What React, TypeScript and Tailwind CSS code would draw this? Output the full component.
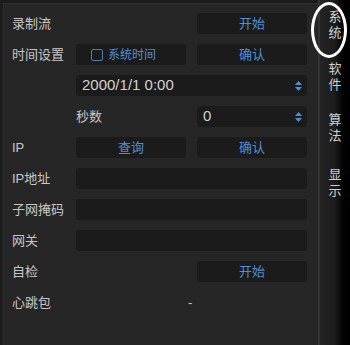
import React from "react";

const font = "font-['Liberation_Sans','Noto_Sans_CJK_SC',sans-serif]";

const Btn: React.FC<{ text: string }> = ({ text }) => (
  <div className="h-[21px] rounded-[3px] bg-[#1b1b1b] flex items-center justify-center text-[13px] text-[#4f8fd6]">
    {text}
  </div>
);

const Field: React.FC<{ children?: React.ReactNode; span?: boolean }> = ({ children, span }) => (
  <div
    className={
      "h-[21px] rounded-[3px] bg-[#1b1b1b] flex items-center " +
      (span ? "col-span-2" : "")
    }
  >
    {children}
  </div>
);

const Spin: React.FC = () => (
  <div className="ml-auto mr-[5px] flex flex-col gap-[2px]">
    <svg width="7" height="4" viewBox="0 0 7 4">
      <path d="M0 4 L3.5 0 L7 4 Z" fill="#4f8fd6" />
    </svg>
    <svg width="7" height="4" viewBox="0 0 7 4">
      <path d="M0 0 L3.5 4 L7 0 Z" fill="#4f8fd6" />
    </svg>
  </div>
);

const Label: React.FC<{ text: string }> = ({ text }) => (
  <div className="text-[13px] text-[#c6c6c6] flex items-center whitespace-nowrap">{text}</div>
);

const Row: React.FC<{ children: React.ReactNode }> = ({ children }) => (
  <div className="grid grid-cols-[53px_110px_110px] gap-x-[11px] h-[31px] items-center">
    {children}
  </div>
);

const tabs = [
  { t: "系统", cls: "mt-[9px]" },
  { t: "软件", cls: "mt-[20px]" },
  { t: "算法", cls: "mt-[19px]" },
  { t: "显示", cls: "mt-[23px]" },
];

export default function App() {
  return (
    <div className={`w-[350px] h-[345px] flex bg-[#1c1c1c] ${font} relative overflow-hidden`}>
      {/* main panel */}
      <div className="w-[315px] mt-[3px] ml-[3px] bg-[#262626] border-l border-t border-[#2e2e2e] pl-[8px] pt-[4px]">
        <Row>
          <Label text="录制流" />
          <div />
          <Btn text="开始" />
        </Row>
        <Row>
          <Label text="时间设置" />
          <Field>
            <div className="ml-[15px] w-[12px] h-[12px] rounded-[2px] border border-[#4a7db3]" />
            <span className="ml-[5px] text-[12px] text-[#4f8fd6]">系统时间</span>
          </Field>
          <Btn text="确认" />
        </Row>
        <Row>
          <div />
          <Field span>
            <span className="ml-[6px] text-[15px] text-[#d2d2d2]">2000/1/1 0:00</span>
            <Spin />
          </Field>
        </Row>
        <Row>
          <div />
          <Label text="秒数" />
          <Field>
            <span className="ml-[6px] text-[15px] text-[#d2d2d2]">0</span>
            <Spin />
          </Field>
        </Row>
        <Row>
          <Label text="IP" />
          <Btn text="查询" />
          <Btn text="确认" />
        </Row>
        <Row>
          <Label text="IP地址" />
          <Field span />
        </Row>
        <Row>
          <Label text="子网掩码" />
          <Field span />
        </Row>
        <Row>
          <Label text="网关" />
          <Field span />
        </Row>
        <Row>
          <Label text="自检" />
          <div />
          <Btn text="开始" />
        </Row>
        <Row>
          <Label text="心跳包" />
          <div />
          <div className="-ml-[9px] text-[13px] text-[#c6c6c6]">-</div>
        </Row>
      </div>
      {/* divider */}
      <div className="w-[2px] bg-[#333333]" />
      {/* sidebar */}
      <div className="flex-1 bg-linear-to-r from-[#242424] via-[#1c1c1c] to-black flex flex-col items-center">
        {tabs.map(({ t, cls }) => (
          <div key={t} className={`flex flex-col items-center text-[13px] leading-[16px] text-[#d0d0d0] ${cls}`}>
            <span>{t[0]}</span>
            <span>{t[1]}</span>
          </div>
        ))}
      </div>
      {/* highlight ring */}
      <div className="absolute left-[311px] top-[2px] w-[36px] h-[56px] rounded-[50%] border-[3px] border-white" />
    </div>
  );
}
